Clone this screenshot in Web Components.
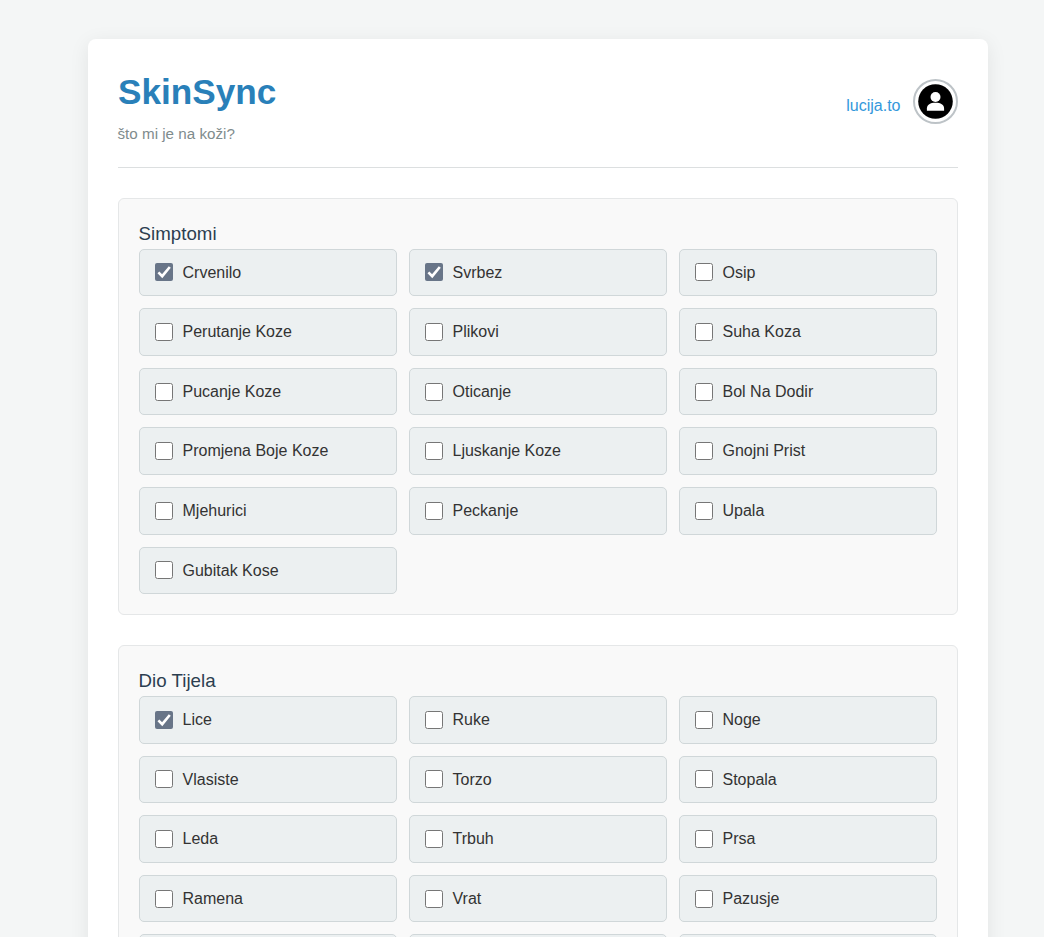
<!DOCTYPE html>
<html lang="hr">
<head>
<meta charset="utf-8">
<title>SkinSync</title>
<style>
html,body{margin:0;height:937px;overflow:hidden;background:#f4f6f6}
body{font:16px/1.6 "Liberation Sans",Arial,sans-serif;color:#333}
</style>
</head>
<body>
<skin-app>
  <skin-header name="SkinSync" tagline="što mi je na koži?"><user-badge slot="user">lucija.to</user-badge></skin-header>
  <check-group label="Simptomi">
    <check-item checked>Crvenilo</check-item><check-item checked>Svrbez</check-item><check-item>Osip</check-item>
    <check-item>Perutanje Koze</check-item><check-item>Plikovi</check-item><check-item>Suha Koza</check-item>
    <check-item>Pucanje Koze</check-item><check-item>Oticanje</check-item><check-item>Bol Na Dodir</check-item>
    <check-item>Promjena Boje Koze</check-item><check-item>Ljuskanje Koze</check-item><check-item>Gnojni Prist</check-item>
    <check-item>Mjehurici</check-item><check-item>Peckanje</check-item><check-item>Upala</check-item>
    <check-item>Gubitak Kose</check-item>
  </check-group>
  <check-group label="Dio Tijela">
    <check-item checked>Lice</check-item><check-item>Ruke</check-item><check-item>Noge</check-item>
    <check-item>Vlasiste</check-item><check-item>Torzo</check-item><check-item>Stopala</check-item>
    <check-item>Leda</check-item><check-item>Trbuh</check-item><check-item>Prsa</check-item>
    <check-item>Ramena</check-item><check-item>Vrat</check-item><check-item>Pazusje</check-item>
    <check-item></check-item><check-item></check-item><check-item></check-item>
  </check-group>
</skin-app>
<script>
function define(name, render) {
  customElements.define(name, class extends HTMLElement {
    connectedCallback() {
      if (!this.shadowRoot) this.attachShadow({mode: 'open'}).innerHTML = render(this);
    }
  });
}
define('skin-app', () => `<style>
:host{display:block;height:937px;overflow:hidden}
main{box-sizing:border-box;width:900px;margin:38.6px 0 0 88px;padding:30px;background:#fff;border-radius:8px;box-shadow:0 4px 20px rgba(0,0,0,.08);display:flex;flex-direction:column;gap:30px}
.page{display:flow-root}
</style><div class="page"><main><slot></slot></main></div>`);
define('skin-header', el => `<style>
:host{display:block}
header{box-sizing:border-box;height:99px;display:flex;justify-content:space-between;align-items:flex-start;border-bottom:1px solid #dcdfe0}
h1{margin:0 0 7px;font-size:35.2px;line-height:46.3px;color:#2980b9}
p{margin:0 0 0 -.5px;font-size:15.2px;line-height:24.3px;color:#7f8c8d}
</style><header><div><h1>${el.getAttribute('name')}</h1><p>${el.getAttribute('tagline')}</p></div><slot name="user"></slot></header>`);
define('user-badge', () => `<style>
:host{display:flex;align-items:center;gap:12.5px;padding-top:10px}
a{color:#3498db;padding-top:9px}
svg{display:block;width:45px;height:45px}
</style><a><slot></slot></a><svg viewBox="0 0 45 45"><circle cx="22.5" cy="22.5" r="21.5" fill="#fff" stroke="#bdc3c7" stroke-width="2"/><circle cx="22.5" cy="22.5" r="17.3"/><circle cx="22.5" cy="18" r="5" fill="#fff"/><path d="M13.9 31.7v-2.2c0-3.7 3.4-5.7 8.6-5.7s8.6 2 8.6 5.7v2.2z" fill="#fff"/></svg>`);
define('check-group', el => `<style>
:host{display:block;box-sizing:border-box;background:#f9f9f9;border:1px solid #e5e7e8;border-radius:6px;padding:20px}
h3{margin:0 0 0 -.4px;font-size:18.72px;font-weight:400;line-height:1.6;color:#2c3e50}
.grid{display:grid;grid-template-columns:repeat(3,1fr);gap:12px}
</style><h3>${el.getAttribute('label')}</h3><div class="grid"><slot></slot></div>`);
define('check-item', el => `<style>
:host{display:block}
label{display:flex;align-items:center;box-sizing:border-box;height:47.6px;padding:10px 15px;background:#ecf0f1;border:1px solid #d0d7d9;border-radius:5px}
.box{display:grid;width:18px;height:18px;margin-right:9.5px;flex:none}
input,svg{grid-area:1/1;width:18px;height:18px;margin:0}
input:checked{appearance:none;background:#687588;border-radius:2px}
svg{display:none;pointer-events:none;fill:none;stroke:#fff;stroke-width:2.6}
input:checked + svg{display:block}
</style><label><span class="box"><input type="checkbox"${el.hasAttribute('checked') ? ' checked' : ''}><svg viewBox="0 0 18 18"><path d="M3.4 9.4 7.2 13.2 14.8 4"/></svg></span><span><slot></slot></span></label>`);
</script>
</body>
</html>
